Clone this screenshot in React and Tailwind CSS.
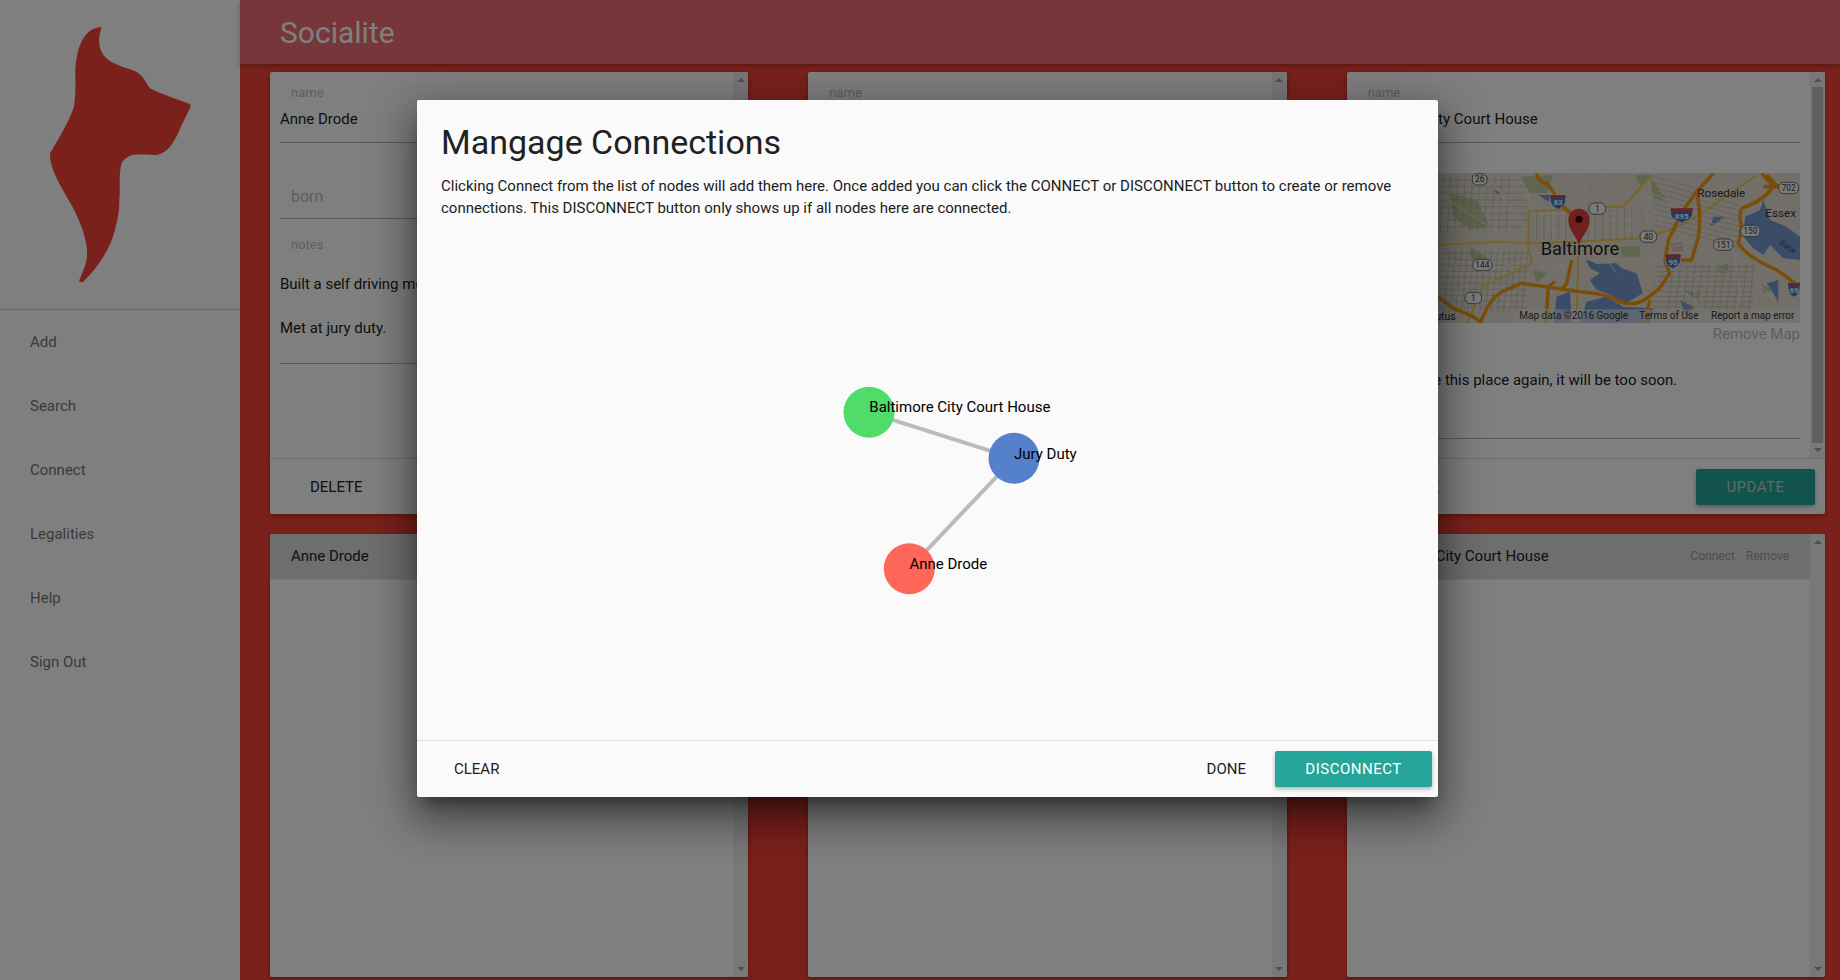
import React from "react";

const Up = () => (
  <svg width="8" height="4" viewBox="0 0 8 4" className="block"><path d="M4 0 8 4H0z" fill="#a0a0a0" /></svg>
);
const Down = () => (
  <svg width="8" height="4" viewBox="0 0 8 4" className="block"><path d="M0 0h8L4 4z" fill="#a0a0a0" /></svg>
);

function Scrollbar({ thumb }) {
  return (
    <div className="w-[15px] shrink-0 bg-[#f1f1f1] flex flex-col items-center pt-[6px] pb-[6px]">
      <Up />
      <div className="flex-1 w-full px-[2px] py-[5px]">
        {thumb && <div className="h-full bg-[#c1c1c1]" />}
      </div>
      <Down />
    </div>
  );
}

function Field({ label, value, h, top, big }) {
  return (
    <div className={`${h} ${top} border-b border-[#b4b4b4] flex flex-col`}>
      <div className={big ? "pl-[11px] text-[16px] leading-[20px] text-[#bdbdbd] mt-[18px]" : "pl-[11px] text-[13px] leading-[14px] text-[#bdbdbd]"}>{label}</div>
      {value && <div className="text-[15px] leading-[20px] text-[#212121] mt-[9px]">{value}</div>}
    </div>
  );
}

function DogLogo() {
  return (
    <svg width="240" height="309" viewBox="0 0 720 927" className="block">
      <path
        fill="#f44336"
        d="M305 82C295 110 293 140 310 165C325 185 350 195 405 213C430 225 438 250 450 265C480 280 520 295 570 312L572 320L545 375C530 410 510 462 465 465C420 465 385 455 365 490C355 520 362 570 358 600C358 640 350 670 345 690C325 770 265 830 250 845C238 848 236 842 238 840C255 800 265 780 260 740C250 660 195 585 175 545C160 515 150 490 150 460C170 425 205 370 222 320C228 280 226 250 226 230C225 160 245 85 300 82Z"
      />
    </svg>
  );
}

const shield = (x, y, t, w = 46) => (
  <g key={t + x}>
    <path d={`M${x - w / 2} ${y - 22}h${w}v16c0 18-${w / 2 - 4} 24-${w / 2} 28c-4-4-${w / 2} -10-${w / 2}-28z`} fill="#3f77c8" stroke="#fff" strokeWidth="2" />
    <path d={`M${x - w / 2} ${y - 22}h${w}v9h-${w}z`} fill="#d8453b" />
    <text x={x} y={y + 9} textAnchor="middle" fontSize="24" fontWeight="700" fill="#fff">{t}</text>
  </g>
);
const pill = (x, y, t, w = 44) => (
  <g key={t + x}>
    <rect x={x - w / 2} y={y - 17} width={w} height="34" rx="15" fill="#f4f4f0" stroke="#555" strokeWidth="2.5" />
    <text x={x} y={y + 9} textAnchor="middle" fontSize="25" fill="#333">{t}</text>
  </g>
);

const thin = [
  "M55 400L300 560", "M60 470L180 540", "M260 340L420 520L470 545", "M460 340V540", "M490 340L500 430", "M560 340L600 430",
  "M640 340L730 500", "M620 400L720 420", "M350 480H660", "M350 510H660", "M350 460H600", "M400 440V540", "M430 440V540", "M520 440V540", "M560 440V540", "M600 440V540",
  "M640 440V540", "M680 440L690 590", "M480 600H740", "M700 600L720 720", "M760 560L880 530", "M880 530L980 610", "M940 560L960 700L940 790", "M840 600L930 640",
  "M780 620L900 700", "M760 670L900 790", "M60 640H170L330 600", "M60 600L160 610", "M220 560L300 660", "M300 340L340 450", "M200 340L325 520", "M820 680L840 790",
  "M980 640L1120 760", "M1000 720L1100 790", "M120 650L200 790", "M60 560L120 720", "M240 700L300 790", "M700 400L900 500", "M860 420L1020 360", "M900 480L960 440", "M1060 440L1140 470",
  "M1020 670L1060 790", "M380 560L440 640", "M360 620H450", "M560 600L590 640",
];
const grid = [];
for (let i = 0; i < 14; i++) grid.push(`M${90 + i * 18} 570L${70 + i * 18} 760`);
for (let i = 0; i < 10; i++) grid.push(`M60 ${580 + i * 18}H320`);
for (let i = 0; i < 10; i++) grid.push(`M700 ${620 + i * 15}H1000`);
for (let i = 0; i < 12; i++) grid.push(`M${760 + i * 22} 610L${740 + i * 22} 790`);
for (let i = 0; i < 10; i++) grid.push(`M${70 + i * 22} 345L${60 + i * 22} 520`);
for (let i = 0; i < 8; i++) grid.push(`M60 ${360 + i * 20}H320`);
for (let i = 0; i < 14; i++) grid.push(`M${350 + i * 22} 445V540`);
for (let i = 0; i < 10; i++) grid.push(`M700 ${350 + i * 16}L960 ${420 + i * 16}`);

function MapPic() {
  return (
    <svg viewBox="1357 173 443 150" width="443" height="150" className="block">
      <g transform="translate(1420 60) scale(.33333)" fontFamily="Roboto, sans-serif">
        <rect x="-200" y="300" width="1400" height="500" fill="#e4dfd3" />
        <g fill="#bccc9c">
          <path d="M90 400L170 420L210 500L150 510L100 470z" />
          <path d="M150 560L200 590L180 610L150 590z" />
          <path d="M300 350L400 345L380 400L330 400z" />
          <path d="M640 345L700 345L660 380z" />
          <path d="M600 560H660V590H610z" />
          <path d="M690 350L740 420L700 420z" />
          <path d="M890 620L925 610L925 640L900 640z" />
          <path d="M790 690L840 700L830 720z" />
          <path d="M1020 670L1060 690L1030 700z" />
          <path d="M340 630L380 640L350 670z" />
        </g>
        <path d="M750 550L790 545L790 575L760 575z" fill="#e0bcb8" />
        <g fill="#7499d0">
          <path d="M495 595L530 612L590 610L605 625L650 640L668 700L620 728L560 700L530 690L510 660L540 640L510 625z" />
          <path d="M500 725L560 710L610 740L700 745L690 790H480z" />
          <path d="M400 790L410 710L450 695L455 790z" />
          <path d="M975 470L1020 450L1030 420L1050 480L1100 500L1140 530V600L1090 595L1050 555L1030 585L1000 565L970 530z" />
          <path d="M355 405L395 405L385 425z" />
          <path d="M220 390L240 395L235 405z" />
          <path d="M1040 670L1075 660L1075 730L1060 700z" />
          <path d="M780 720L820 740L800 780z" />
          <path d="M880 470L920 470L870 500z" />
        </g>
        <g fill="none" stroke="#b4b0a4" strokeWidth="1.8">
          {grid.map((d, i) => <path key={i} d={d} />)}
        </g>
        <g fill="none" stroke="#f0ece2" strokeWidth="2.5">
          {thin.map((d, i) => <path key={i} d={d} />)}
        </g>
        <g fill="none" stroke="#f0c850" strokeWidth="6">
          <path d="M40 555L240 545L330 550L470 545L660 535L750 510L830 470L1010 345" />
          <path d="M325 455L325 560L335 610L190 680L140 790" />
          <path d="M325 455L440 448" />
          <path d="M510 440L610 440L695 345" />
          <path d="M475 590L470 760" />
        </g>
        <g fill="none" stroke="#f59a10" strokeWidth="10.5" strokeLinejoin="round">
          <path d="M350 340Q355 365 385 375Q405 400 410 420L440 450L480 480" />
          <path d="M880 340L830 395L790 450L745 540L735 600L748 640Q720 690 700 700Q650 745 600 725Q560 700 480 695L380 680L305 670Q250 690 225 710Q200 740 180 790" />
          <path d="M830 395Q845 470 835 530L815 600H760" />
          <path d="M40 700L100 745L160 770L185 790" />
          <path d="M1025 340L1060 380Q1030 420 990 435L965 445Q955 470 965 500L955 550Q980 590 1070 630L1140 680" />
          <path d="M1040 345L1075 380H1030" />
          <path d="M455 600L440 670L425 690" />
          <path d="M405 665L385 680L378 790" />
          <path d="M670 790L690 720" />
        </g>
        {shield(414, 427, "83", 46)}
        {shield(785, 467, "895", 66)}
        {shield(759, 605, "95", 46)}
        {shield(1122, 690, "69", 36)}
        {pill(179, 358, "26")}
        {pill(1106, 384, "702", 60)}
        {pill(532, 446, "1", 50)}
        {pill(685, 530, "40", 50)}
        {pill(991, 513, "150", 58)}
        {pill(910, 554, "151", 58)}
        {pill(187, 615, "144", 58)}
        {pill(160, 714, "1", 50)}
        <text x="832" y="410" fontSize="35" fill="#333">Rosedale</text>
        <text x="1036" y="470" fontSize="35" fill="#333">Essex</text>
        <text x="1078" y="556" fontSize="25" fill="#2f4f80" transform="rotate(35 1085 550)">Back</text>
        <text x="362" y="586" fontSize="55" fill="#222">Baltimore</text>
        <text x="-2" y="779" fontSize="31" fill="#222">Arbutus</text>
        <path d="M477 558C470 525 445 515 445 478A32 32 0 0 1 509 478C509 515 484 525 477 558z" fill="#e2403b" />
        <circle cx="477" cy="478" r="11" fill="#3a0a08" />
        <rect x="285" y="748" width="860" height="42" fill="#f0ede4" fillOpacity=".6" />
        <text x="298" y="776" fontSize="30" fill="#333">Map data ©2016 Google</text>
        <text x="658" y="776" fontSize="30" fill="#333">Terms of Use</text>
        <text x="873" y="776" fontSize="30" fill="#333">Report a map error</text>
      </g>
    </svg>
  );
}

function Card({ thumb, footer, children }) {
  return (
    <div className="bg-white rounded-[2px] shadow-[0_2px_5px_rgba(0,0,0,0.3)] flex flex-col overflow-hidden">
      <div className="flex-1 flex min-h-0">
        <div className="flex-1 min-w-0 pl-[10px] pr-[10px] pt-[14px]">{children}</div>
        <Scrollbar thumb={thumb} />
      </div>
      <div className="h-[56px] shrink-0 border-t border-[#d8d8d8] flex items-center justify-between pl-[40px] pr-[10px]">
        {footer}
      </div>
    </div>
  );
}

function ListCard({ name }) {
  return (
    <div className="bg-white rounded-[2px] shadow-[0_2px_5px_rgba(0,0,0,0.3)] flex overflow-hidden">
      <div className="flex-1 min-w-0">
        <div className="h-[44px] bg-[#dcdcdc] shadow-[0_1px_2px_rgba(0,0,0,0.2)] flex items-center justify-between pl-[21px] pr-[21px]">
          <span className="text-[15px] text-[#212121]">{name}</span>
          <span className="flex gap-[11px] text-[12px] text-[#9a9a9a]"><span>Connect</span><span>Remove</span></span>
        </div>
      </div>
      <Scrollbar />
    </div>
  );
}

const nav = ["Add", "Search", "Connect", "Legalities", "Help", "Sign Out"];

export default function App() {
  return (
    <div className="relative flex h-[980px] w-[1840px] overflow-hidden bg-[#f44336] font-['Roboto',sans-serif]">
      <aside className="w-[240px] shrink-0 bg-white flex flex-col">
        <div className="h-[310px] border-b border-[#d0d0d0]"><DogLogo /></div>
        <nav className="flex flex-col pl-[30px]">
          {nav.map((n) => (
            <div key={n} className="h-[64px] flex items-center text-[15px] text-[#757575]">{n}</div>
          ))}
        </nav>
      </aside>
      <main className="flex-1 min-w-0 flex flex-col">
        <header className="h-[64px] shrink-0 bg-[#ef6d72] shadow-[0_2px_5px_rgba(0,0,0,0.26)] flex items-center pl-[40px] text-[30px] text-white">Socialite</header>
        <div className="grid grid-cols-3 gap-x-[60px] gap-y-[20px] grid-rows-[442px_443px] pl-[30px] pr-[15px] pt-[8px]">
          <Card footer={<span className="text-[15px] pt-[1px] text-[#212121]">DELETE</span>}>
            <Field label="name" value="Anne Drode" h="h-[57px]" />
            <Field label="born" big h="h-[50px]" top="mt-[26px]" />
            <div className="mt-[19px] h-[126px] border-b border-[#b4b4b4]">
              <div className="pl-[11px] text-[13px] leading-[14px] text-[#bdbdbd]">notes</div>
              <div className="text-[15px] leading-[22px] text-[#212121] mt-[21px]">Built a self driving motorcycle.</div>
              <div className="text-[15px] leading-[22px] text-[#212121] mt-[22px]">Met at jury duty.</div>
            </div>
          </Card>
          <Card footer={<span className="text-[15px] pt-[1px] text-[#212121]">DELETE</span>}>
            <Field label="name" value="Jury Duty" h="h-[57px]" />
          </Card>
          <Card
            thumb
            footer={
              <>
                <span className="text-[15px] pt-[1px] text-[#212121]">DELETE</span>
                <span className="w-[119px] h-[36px] pt-[2px] bg-[#26a69a] rounded-[2px] shadow-[0_2px_4px_rgba(0,0,0,0.3)] flex items-center justify-center text-[15px] tracking-[0.5px] text-[#bdd6d2]">UPDATE</span>
              </>
            }
          >
            <Field label="name" value="Baltimore City Court House" h="h-[57px]" />
            <div className="mt-[30px] w-full"><MapPic /></div>
            <div className="text-right text-[15px] leading-[20px] mt-[1px] text-[#bdbdbd]">Remove Map</div>
            <div className="text-[15px] leading-[22px] text-[#212121] mt-[25px]">If I never see this place again, it will be too soon.</div>
            <div className="border-b border-[#b4b4b4] h-[48px]" />
          </Card>
          <ListCard name="Anne Drode" />
          <ListCard name="Jury Duty" />
          <ListCard name="Baltimore City Court House" />
        </div>
      </main>

      <div className="absolute inset-0 bg-black/50 pl-[417px] pt-[100px]">
        <div className="w-[1021px] h-[697px] bg-[#fafafa] rounded-[2px] shadow-[0_11px_15px_-7px_rgba(0,0,0,0.4),0_24px_38px_3px_rgba(0,0,0,0.28),0_9px_46px_8px_rgba(0,0,0,0.24)] flex flex-col">
          <div className="flex-1 min-h-0 flex flex-col px-[24px]">
            <h1 className="text-[34px] leading-[40px] text-[#212121] mt-[22px]">Mangage Connections</h1>
            <p className="text-[15px] leading-[22px] text-[#212121] mt-[13px]">
              Clicking Connect from the list of nodes will add them here. Once added you can click the CONNECT or DISCONNECT button to create or remove connections. This DISCONNECT button only shows up if all nodes here are connected.
            </p>
            <div className="flex-1 relative -mx-[24px]">
              <svg viewBox="417 219 1021 521" width="1021" height="521" className="absolute inset-0 block" fontFamily="Roboto, sans-serif" fontSize="15">
                <line x1="869" y1="412.3" x2="1014" y2="458.3" stroke="#bbb" strokeWidth="4" />
                <line x1="1014" y1="458.3" x2="909.3" y2="568.7" stroke="#bbb" strokeWidth="4" />
                <circle cx="869" cy="412.3" r="25.5" fill="#4fdc68" />
                <circle cx="1014" cy="458.3" r="25.5" fill="#5580cb" />
                <circle cx="909.3" cy="568.7" r="25.5" fill="#ff665a" />
                <text x="869.3" y="411.5" fill="#000">Baltimore City Court House</text>
                <text x="1014" y="458.5" fill="#000">Jury Duty</text>
                <text x="909.5" y="568.5" fill="#000">Anne Drode</text>
              </svg>
            </div>
          </div>
          <div className="h-[57px] shrink-0 border-t border-[#e0e0e0] flex items-center pl-[37px] pr-[6px] text-[15px] text-[#212121]">
            <span>CLEAR</span>
            <span className="ml-auto">DONE</span>
            <span className="ml-[29px] w-[157px] h-[36px] bg-[#26a69a] rounded-[2px] shadow-[0_2px_4px_rgba(0,0,0,0.3)] flex items-center justify-center text-white tracking-[0.5px]">DISCONNECT</span>
          </div>
        </div>
      </div>
    </div>
  );
}
